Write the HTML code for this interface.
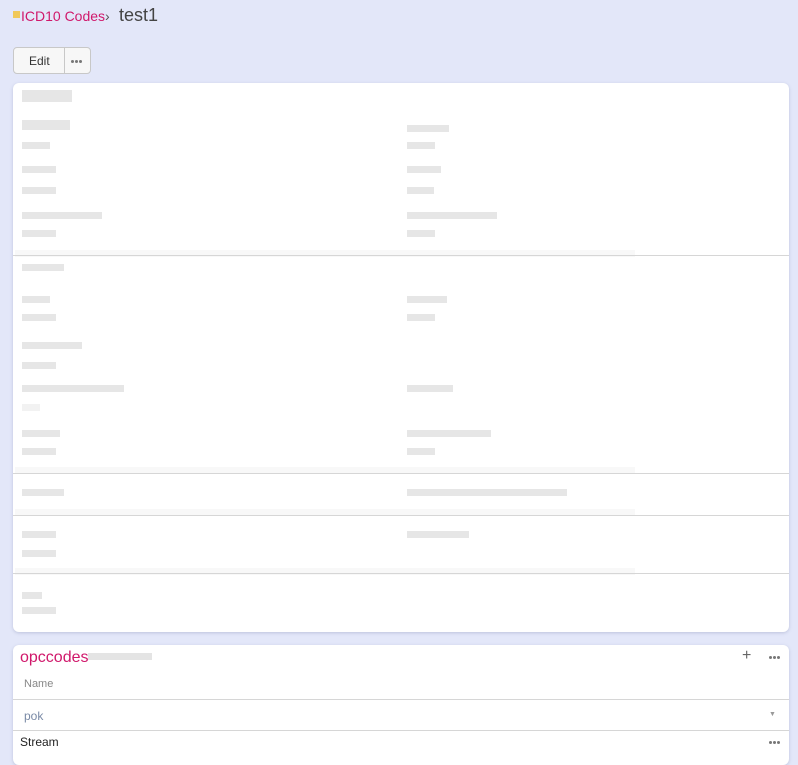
<!DOCTYPE html>
<html><head><meta charset="utf-8"><style>
*{margin:0;padding:0;box-sizing:border-box}
body{width:798px;height:754px;background:#e3e7f9;font-family:"Liberation Sans",sans-serif;position:relative;overflow:hidden}
.a{position:absolute}
.b{position:absolute;background:#e6e6e6;height:7px}
.c{position:absolute;background:#fff;border-radius:6px;box-shadow:0 1px 3px rgba(120,130,170,.35)}
.l{position:absolute;left:13px;width:776px;height:1px;background:#d6d6d6}
.band{position:absolute;left:15px;width:620px;height:7px;background:#f8f8f8}
.d{position:absolute;display:flex;gap:1px}
.d i{display:block;width:3px;height:3px;border-radius:50%;background:#777}
</style></head><body>
<div class="a" style="left:13px;top:11px;width:7px;height:7px;background:#f0c85a"></div>
<div class="a" style="left:21px;top:8px;font-size:14px;color:#d0186b">ICD10 Codes<span style="color:#555">›</span></div>
<div class="a" style="left:119px;top:5px;font-size:18px;color:#444">test1</div>
<div class="a" style="left:13px;top:47px;width:78px;height:27px;border:1px solid #c8c8c8;border-radius:4px;background:#f7f7f7"></div>
<div class="a" style="left:64px;top:47px;width:1px;height:27px;background:#c8c8c8"></div>
<div class="a" style="left:29px;top:54px;font-size:12px;color:#333">Edit</div>
<div class="d" style="left:71px;top:60px"><i></i><i></i><i></i></div>

<div class="c" style="left:13px;top:83px;width:776px;height:549px"></div>
<div class="b" style="left:22px;top:90px;width:50px;height:12px"></div>
<div class="b" style="left:22px;top:120px;width:48px;height:10px"></div><div class="b" style="left:407px;top:125px;width:42px"></div>
<div class="b" style="left:22px;top:142px;width:28px"></div><div class="b" style="left:407px;top:142px;width:28px"></div>
<div class="b" style="left:22px;top:166px;width:34px"></div><div class="b" style="left:407px;top:166px;width:34px"></div>
<div class="b" style="left:22px;top:187px;width:34px"></div><div class="b" style="left:407px;top:187px;width:27px"></div>
<div class="b" style="left:22px;top:212px;width:80px"></div><div class="b" style="left:407px;top:212px;width:90px"></div>
<div class="b" style="left:22px;top:230px;width:34px"></div><div class="b" style="left:407px;top:230px;width:28px"></div>
<div class="band" style="top:250px"></div><div class="l" style="top:255px"></div>
<div class="b" style="left:22px;top:264px;width:42px"></div>
<div class="b" style="left:22px;top:296px;width:28px"></div><div class="b" style="left:407px;top:296px;width:40px"></div>
<div class="b" style="left:22px;top:314px;width:34px"></div><div class="b" style="left:407px;top:314px;width:28px"></div>
<div class="b" style="left:22px;top:342px;width:60px"></div><div class="b" style="left:22px;top:362px;width:34px"></div>
<div class="b" style="left:22px;top:385px;width:102px"></div><div class="b" style="left:407px;top:385px;width:46px"></div>
<div class="b" style="left:22px;top:404px;width:18px;background:#f2f2f2"></div>
<div class="b" style="left:22px;top:430px;width:38px"></div><div class="b" style="left:407px;top:430px;width:84px"></div>
<div class="b" style="left:22px;top:448px;width:34px"></div><div class="b" style="left:407px;top:448px;width:28px"></div>
<div class="band" style="top:467px"></div><div class="l" style="top:473px"></div>
<div class="b" style="left:22px;top:489px;width:42px"></div><div class="b" style="left:407px;top:489px;width:160px"></div>
<div class="band" style="top:509px"></div><div class="l" style="top:515px"></div>
<div class="b" style="left:22px;top:531px;width:34px"></div><div class="b" style="left:407px;top:531px;width:62px"></div>
<div class="b" style="left:22px;top:550px;width:34px"></div>
<div class="band" style="top:568px"></div><div class="l" style="top:573px"></div>
<div class="b" style="left:22px;top:592px;width:20px"></div><div class="b" style="left:22px;top:607px;width:34px"></div>

<div class="c" style="left:13px;top:645px;width:776px;height:120px"></div>
<div class="b" style="left:88px;top:653px;width:64px;background:#e4e4e4"></div>
<div class="a" style="left:20px;top:649px;font-size:16px;color:#d0186b">opccodes</div>
<div class="a" style="left:742px;top:647px;font-size:16px;color:#666">+</div>
<div class="d" style="left:769px;top:656px"><i></i><i></i><i></i></div>
<div class="a" style="left:24px;top:678px;font-size:11px;color:#888">Name</div>
<div class="l" style="top:699px"></div>
<div class="a" style="left:24px;top:709px;font-size:12px;color:#7a8aa6">pok</div>
<div class="a" style="left:769px;top:711px;font-size:7px;color:#999">▼</div>
<div class="l" style="top:730px"></div>
<div class="a" style="left:20px;top:735px;font-size:12px;color:#222">Stream</div>
<div class="d" style="left:769px;top:741px"><i></i><i></i><i></i></div>
</body></html>
